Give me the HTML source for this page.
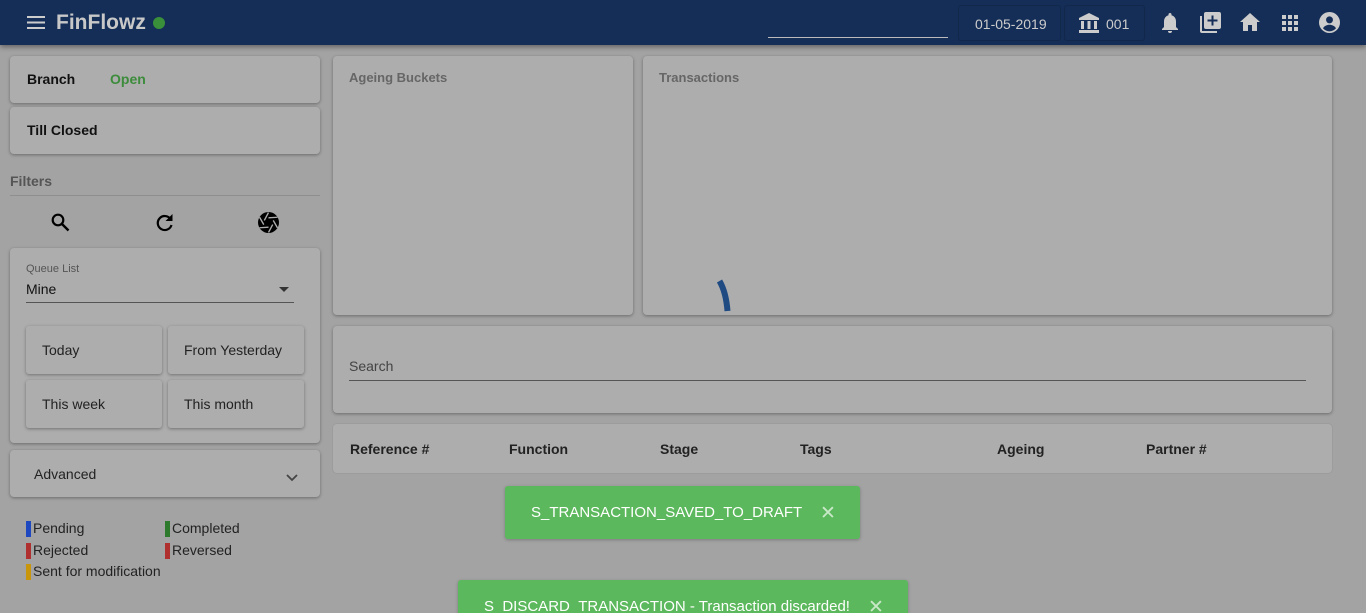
<!DOCTYPE html>
<html style="width:1366px;height:613px;overflow:hidden"><head><meta charset="utf-8">
<style>
*{box-sizing:border-box;margin:0;padding:0}
html,body{width:1366px;height:613px;overflow:hidden}
body{background:#a3a3a3;font-family:"Liberation Sans",sans-serif;position:relative;color:#111}
.top{position:absolute;left:0;top:0;width:1366px;height:45px;background:#152e57;box-shadow:0 2px 5px rgba(0,0,0,.4)}
.card{position:absolute;background:#adadad;border-radius:4px;box-shadow:0 1px 3px rgba(0,0,0,.35)}
.abs{position:absolute}
.b{font-weight:bold}
.btn{position:absolute;width:136px;height:48px;background:#adadad;border-radius:3px;box-shadow:0 1px 3px rgba(0,0,0,.35);font-size:14px;color:#222;padding:16px 0 0 16px}
.lg{position:absolute;font-size:14px;color:#222;padding-left:7px}
.lg:before{content:"";position:absolute;left:0;top:1px;width:5px;height:16px;background:var(--c)}
.toast{position:absolute;background:#5cb85c;color:#fff;font-size:15px;border-radius:3px;box-shadow:0 1px 3px rgba(0,0,0,.25)}
.th{position:absolute;top:441px;font-size:14px;font-weight:bold;color:#222}
</style></head><body>
<div class="top">
  <svg class="abs" style="left:27px;top:16px" width="18" height="13" viewBox="0 0 18 13"><rect y="0" width="18" height="2" fill="#ccc"/><rect y="5.5" width="18" height="2" fill="#ccc"/><rect y="11" width="18" height="2" fill="#ccc"/></svg>
  <div class="abs b" style="left:56px;top:11px;font-size:21px;color:#c8c8c8">FinFlowz</div>
  <div class="abs" style="left:153px;top:17px;width:12px;height:12px;border-radius:50%;background:#3a8f3a"></div>
  <div class="abs" style="left:768px;top:37px;width:180px;height:1px;background:#bbb"></div>
  <div class="abs" style="left:958px;top:5px;width:103px;height:36px;border:1px solid #12284b;border-radius:3px;color:#ccc;font-size:14px;padding:10px 0 0 16px">01-05-2019</div>
  <div class="abs" style="left:1064px;top:5px;width:81px;height:36px;border:1px solid #12284b;border-radius:3px;color:#ccc;font-size:14px;padding:10px 0 0 41px">001</div>
  <svg class="abs" style="left:1079px;top:13px" width="20" height="20" viewBox="0 0 20 20" fill="#ccc"><path d="M10 0 L20 5 V7 H0 V5Z"/><rect x="2" y="8" width="3" height="8"/><rect x="8.5" y="8" width="3" height="8"/><rect x="15" y="8" width="3" height="8"/><rect x="0" y="17" width="20" height="3"/></svg>
  <svg class="abs" style="left:1161px;top:13px" width="18" height="21" viewBox="0 0 18 21" fill="#ccc"><path d="M9 0a1.5 1.5 0 0 1 1.5 1.5v.7A6 6 0 0 1 15 8v6l2 2v1H1v-1l2-2V8a6 6 0 0 1 4.5-5.8v-.7A1.5 1.5 0 0 1 9 0z"/><path d="M7 18h4a2 2 0 0 1-4 0z"/></svg>
  <svg class="abs" style="left:1200px;top:12px" width="21" height="21" viewBox="0 0 21 21" fill="#ccc"><path d="M0 4h2v15h15v2H2a2 2 0 0 1-2-2z"/><path d="M6 0h13a2 2 0 0 1 2 2v13a2 2 0 0 1-2 2H6a2 2 0 0 1-2-2V2a2 2 0 0 1 2-2zm5.5 3.5v4h-4v2h4v4h2v-4h4v-2h-4v-4z"/></svg>
  <svg class="abs" style="left:1240px;top:13px" width="20" height="18" viewBox="0 0 20 18" fill="#ccc"><path d="M10 0L20 9h-3v9h-5v-6H8v6H3V9H0z"/></svg>
  <svg class="abs" style="left:1282px;top:15px" width="16" height="16" viewBox="0 0 16 16" fill="#ccc"><rect x="0" y="0" width="4" height="4"/><rect x="6" y="0" width="4" height="4"/><rect x="12" y="0" width="4" height="4"/><rect x="0" y="6" width="4" height="4"/><rect x="6" y="6" width="4" height="4"/><rect x="12" y="6" width="4" height="4"/><rect x="0" y="12" width="4" height="4"/><rect x="6" y="12" width="4" height="4"/><rect x="12" y="12" width="4" height="4"/></svg>
  <svg class="abs" style="left:1319px;top:12px" width="21" height="21" viewBox="0 0 20 20"><circle cx="10" cy="10" r="10" fill="#ccc"/><circle cx="10" cy="7.5" r="3.3" fill="#152e57"/><path d="M3.8 15.5c1.5-2.3 3.8-3.3 6.2-3.3s4.7 1 6.2 3.3A8 8 0 0 1 3.8 15.5z" fill="#152e57"/></svg>
</div>

<div class="card" style="left:10px;top:56px;width:310px;height:47px"><span class="abs b" style="left:17px;top:15px;font-size:14px">Branch</span><span class="abs b" style="left:100px;top:15px;font-size:14px;color:#3c8c3c">Open</span></div>
<div class="card" style="left:10px;top:107px;width:310px;height:47px"><span class="abs b" style="left:17px;top:15px;font-size:14px">Till Closed</span></div>
<div class="abs b" style="left:10px;top:173px;font-size:14px;color:#555">Filters</div>
<div class="abs" style="left:10px;top:195px;width:310px;height:1px;background:#8f8f8f"></div>
<svg class="abs" style="left:51px;top:213px" width="19" height="19" viewBox="0 0 19 19"><circle cx="7" cy="7" r="5.3" fill="none" stroke="#000" stroke-width="2.2"/><path d="M11 11l6.5 6.5" stroke="#000" stroke-width="2.4"/></svg>
<svg class="abs" style="left:156px;top:213px" width="18" height="19" viewBox="0 0 18 19"><path d="M14.5 6A7 7 0 1 0 15.5 12" fill="none" stroke="#000" stroke-width="2.2"/><path d="M16.5 1v7h-7z" fill="#000"/></svg>
<svg class="abs" style="left:258px;top:212px" width="21" height="21" viewBox="0 0 20 20"><circle cx="10" cy="10" r="10" fill="#000"/><g stroke="#adadad" stroke-width="1.3"><path d="M10 0.5L6 8"/><path d="M18.5 5L10 5.5" /><path d="M18.5 15L14.5 8"/><path d="M10 19.5L14 12"/><path d="M1.5 15L10 14.5"/><path d="M1.5 5L5.5 12"/></g></svg>

<div class="card" style="left:10px;top:248px;width:310px;height:195px">
  <div class="abs" style="left:16px;top:15px;font-size:11px;color:#555">Queue List</div>
  <div class="abs" style="left:16px;top:33px;font-size:14px;color:#111">Mine</div>
  <div class="abs" style="left:269px;top:39px;width:0;height:0;border-left:5px solid transparent;border-right:5px solid transparent;border-top:5px solid #333"></div>
  <div class="abs" style="left:16px;top:54px;width:268px;height:1px;background:#555"></div>
</div>
<div class="btn" style="left:26px;top:326px">Today</div>
<div class="btn" style="left:168px;top:326px">From Yesterday</div>
<div class="btn" style="left:26px;top:380px">This week</div>
<div class="btn" style="left:168px;top:380px">This month</div>
<div class="card" style="left:10px;top:450px;width:310px;height:47px"><span class="abs" style="left:24px;top:16px;font-size:14px;color:#222">Advanced</span>
<svg class="abs" style="left:276px;top:24px" width="12" height="8" viewBox="0 0 12 8"><path d="M1 1l5 5 5-5" fill="none" stroke="#444" stroke-width="1.8"/></svg></div>
<div class="lg" style="left:26px;top:520px;--c:#1e48c0">Pending</div>
<div class="lg" style="left:165px;top:520px;--c:#2d7a2d">Completed</div>
<div class="lg" style="left:26px;top:542px;--c:#b03030">Rejected</div>
<div class="lg" style="left:165px;top:542px;--c:#b03030">Reversed</div>
<div class="lg" style="left:26px;top:563px;--c:#c9950a">Sent for modification</div>

<div class="card" style="left:333px;top:56px;width:300px;height:259px"><span class="abs b" style="left:16px;top:14px;font-size:13px;color:#666">Ageing Buckets</span></div>
<div class="card" style="left:643px;top:56px;width:689px;height:259px"><span class="abs b" style="left:16px;top:14px;font-size:13px;color:#666">Transactions</span></div>
<svg class="abs" style="left:712px;top:276px" width="26" height="38" viewBox="0 0 26 38"><path d="M7.5 5 Q14 16 15.5 35" fill="none" stroke="#1f4a82" stroke-width="6"/></svg>

<div class="card" style="left:333px;top:326px;width:999px;height:87px">
  <span class="abs" style="left:16px;top:32px;font-size:14px;color:#444">Search</span>
  <div class="abs" style="left:16px;top:54px;width:957px;height:1px;background:#555"></div>
</div>
<div class="card" style="left:333px;top:424px;width:999px;height:49px;box-shadow:0 0 0 1px #9c9c9c"></div>
<div class="th" style="left:350px">Reference #</div>
<div class="th" style="left:509px">Function</div>
<div class="th" style="left:660px">Stage</div>
<div class="th" style="left:800px">Tags</div>
<div class="th" style="left:997px">Ageing</div>
<div class="th" style="left:1146px">Partner #</div>

<div class="toast" style="left:505px;top:486px;width:355px;height:53px"><span class="abs" style="left:26px;top:18px">S_TRANSACTION_SAVED_TO_DRAFT</span><span class="abs" style="left:315px;top:16px;font-size:19px;color:#c8e8c8">✕</span></div>
<div class="toast" style="left:458px;top:580px;width:450px;height:33px;border-radius:3px 3px 0 0"><span class="abs" style="left:26px;top:18px">S_DISCARD_TRANSACTION - Transaction discarded!</span><span class="abs" style="left:410px;top:16px;font-size:19px;color:#c8e8c8">✕</span></div>
</body></html>
